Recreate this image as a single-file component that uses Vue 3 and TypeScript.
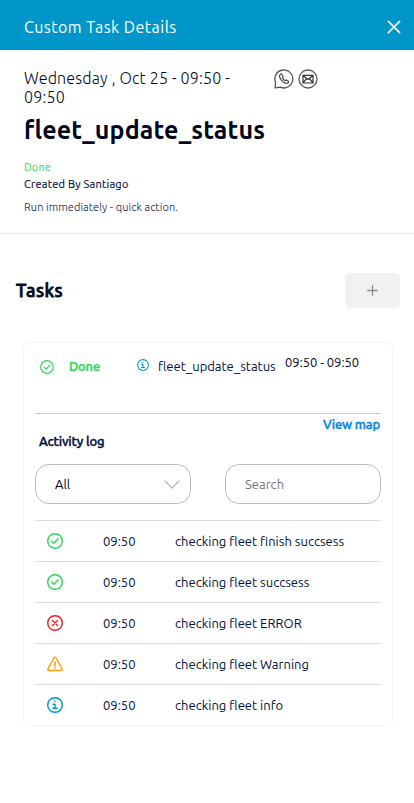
<script setup lang="ts">
import { ref, computed } from 'vue'

type Kind = 'success' | 'error' | 'warning' | 'info'
interface LogEntry {
  kind: Kind
  time: string
  text: string
}

const search = ref('')
const entries: LogEntry[] = [
  { kind: 'success', time: '09:50', text: 'checking fleet finish succsess' },
  { kind: 'success', time: '09:50', text: 'checking fleet succsess' },
  { kind: 'error', time: '09:50', text: 'checking fleet ERROR' },
  { kind: 'warning', time: '09:50', text: 'checking fleet Warning' },
  { kind: 'info', time: '09:50', text: 'checking fleet info' },
]
const visible = computed(() => entries.filter((e) => e.text.includes(search.value)))
</script>

<template>
  <div class="panel">
    <header class="bar">
      <span class="bar-title">Custom Task Details</span>
      <svg class="close" viewBox="0 0 14 14"><path d="M1.4 1.4 12.6 12.6M12.6 1.4 1.4 12.6" /></svg>
    </header>

    <section class="summary">
      <div class="summary-top">
        <div class="date">Wednesday , Oct 25 - 09:50 - 09:50</div>
        <div class="contacts">
          <svg viewBox="0 0 20 20">
            <path d="M1.200 18.900 1.500 13.300A9 9 0 1 1 6.300 18.200Z" />
            <path d="M6.600 5.200c-1.800 1-1.300 3.400.8 5.900s4.700 4 6.400 2.900c.9-.6 1.100-1.200.5-1.700l-1.500-1.100c-.5-.4-.9-.2-1.400.4-.9.100-2.900-1.900-2.900-2.900.6-.5.8-.9.500-1.400l-1-1.800c-.3-.5-.8-.6-1.400-.3Z" />
          </svg>
          <svg viewBox="0 0 20 20">
            <circle cx="10" cy="10" r="9" />
            <path class="heavy" d="M5 6.300h10v7.700H5ZM5 6.500l5 4 5-4M5 13.800l3.200-3.800M15 13.800l-3.200-3.800" />
          </svg>
        </div>
      </div>
      <h1 class="name">fleet_update_status</h1>
      <div class="state">Done</div>
      <div class="author">Created By Santiago</div>
      <div class="note">Run immediately - quick action.</div>
    </section>

    <section class="tasks">
      <div class="tasks-head">
        <h2>Tasks</h2>
        <button class="add" type="button">
          <svg viewBox="0 0 12 12"><path d="M6 .8v10.400M.8 6h10.400" /></svg>
        </button>
      </div>

      <article class="card">
        <div class="task">
          <svg class="icon success task-ok" viewBox="0 0 16 16"><circle cx="8" cy="8" r="7.200" /><path d="m4.800 8.200 2.300 2.200 4-4.500" /></svg>
          <span class="task-state">Done</span>
          <svg class="icon info task-info" viewBox="0 0 16 16"><circle cx="8" cy="8" r="7.200" /><path d="M6.200 7.200H8v4M6 11.300h4.200" /><path class="dot" d="M7.900 4.200v.6" /></svg>
          <span class="task-name">fleet_update_status</span>
          <span class="task-time">09:50 - 09:50</span>
        </div>

        <div class="map-row"><a class="map">View map</a></div>
        <h3 class="log-title">Activity log</h3>

        <div class="filters">
          <div class="field select">
            <span>All</span>
            <svg viewBox="0 0 16 9"><path d="m1 1 7 7 7-7" /></svg>
          </div>
          <input v-model="search" class="field input" placeholder="Search" />
        </div>

        <ul class="log">
          <li v-for="(e, i) in visible" :key="i">
            <svg class="icon" :class="e.kind" viewBox="0 0 16 16">
              <circle v-if="e.kind !== 'warning'" cx="8" cy="8" r="7.300" />
              <path v-if="e.kind === 'success'" d="m4.600 8.200 2.300 2.100 4.200-4.500" />
              <path v-else-if="e.kind === 'error'" d="m5.500 5.500 5 5m0-5-5 5" />
              <template v-else-if="e.kind === 'warning'">
                <path d="M7.100 1.700.9 13.100c-.4.800 0 1.400.8 1.400h12.600c.8 0 1.200-.6.800-1.400L8.900 1.700c-.4-.7-1.400-.7-1.800 0Z" />
                <path class="mark" d="M8 6.200v3.600M8 11.900v.2" />
              </template>
              <template v-else>
                <path d="M6.200 7.200H8v4M6 11.300h4.200" />
                <path class="dot" d="M7.900 4.200v.6" />
              </template>
            </svg>
            <span class="log-time">{{ e.time }}</span>
            <span class="log-text">{{ e.text }}</span>
          </li>
        </ul>
      </article>
    </section>
  </div>
</template>

<style>
body {
  background: #fff;
}
</style>

<style scoped>
.panel {
  min-height: 803px;
  font-family: Ubuntu, 'Noto Sans', sans-serif;
  font-size: 13px;
  color: #00103f;
  background: #fff;
}
h1,
h2,
h3,
ul {
  margin: 0;
  padding: 0;
}
svg {
  display: block;
  flex: none;
  fill: none;
  stroke: currentColor;
  stroke-linecap: round;
  stroke-linejoin: round;
}
.bar {
  box-sizing: border-box;
  height: 50px;
  padding: 4px 13px 0 24px;
  display: flex;
  align-items: center;
  justify-content: space-between;
  background: #0096c9;
  color: #fff;
}
.bar-title {
  font-size: 16px;
  line-height: 46px;
  letter-spacing: 0.48px;
}
.close {
  width: 14px;
  height: 14px;
  stroke-width: 1.6;
}
.summary {
  box-sizing: border-box;
  height: 184px;
  padding: 19px 24px 0;
  border-bottom: 1px solid #e5e5e5;
}
.summary-top {
  display: flex;
}
.date {
  width: 250px;
  box-sizing: border-box;
  padding-right: 30px;
  font-size: 16px;
  font-weight: 300;
  line-height: 19px;
  letter-spacing: 0.19px;
  color: #00071c;
}
.contacts {
  display: flex;
  gap: 4px;
  color: #555;
}
.contacts svg {
  width: 20px;
  height: 20px;
  stroke-width: 1.3;
}
.contacts .heavy {
  stroke: #333;
  stroke-width: 1.2;
}
.name {
  margin-top: 5px;
  font-size: 25px;
  font-weight: 600;
  line-height: 36px;
  letter-spacing: 0.15px;
  color: #00071c;
}
.state,
.author,
.note {
  font-size: 11px;
  line-height: 16px;
}
.state {
  margin-top: 11px;
  letter-spacing: 0.1px;
  color: #2fd657;
}
.author {
  margin-top: 1px;
  letter-spacing: 0.25px;
  -webkit-text-stroke: 0.15px currentColor;
}
.note {
  margin-top: 7px;
  font-weight: 300;
  letter-spacing: 0.1px;
}
.tasks {
  padding: 39px 14px 0 16px;
}
.tasks-head {
  display: flex;
  justify-content: space-between;
}
.tasks-head h2 {
  font-size: 18px;
  font-weight: 500;
  line-height: 35px;
  letter-spacing: 0.5px;
  -webkit-text-stroke: 0.8px currentColor;
  color: #00071c;
}
.add {
  width: 55px;
  height: 35px;
  padding: 0;
  border: 0;
  border-radius: 5px;
  display: grid;
  place-items: center;
  background: #f1f1f1;
  color: #8c8c8c;
}
.add svg {
  width: 11px;
  height: 11px;
  stroke-width: 1.4;
}
.card {
  box-sizing: border-box;
  width: 368px;
  margin: 35px 0 0 8px;
  padding: 0 11px;
  border-radius: 5px;
  box-shadow: 0 0 3px rgba(0, 0, 0, 0.13);
}
.task {
  box-sizing: border-box;
  height: 71px;
  padding: 14px 0 0 5px;
  display: flex;
  align-items: flex-start;
  line-height: 18px;
  border-bottom: 1px solid #ccc;
}
.success {
  color: #2fd657;
}
.error {
  color: #ee1c25;
}
.warning {
  color: #f9a11b;
}
.info {
  color: #0096c9;
}
.icon {
  width: 16px;
  height: 16px;
  stroke-width: 1.4;
}
.icon .mark {
  stroke-width: 1.7;
}
.task .task-ok {
  width: 14px;
  height: 14px;
  margin-top: 3px;
}
.task-state,
.map,
.log-title {
  font-size: 13px;
  font-weight: 500;
  -webkit-text-stroke: 0.4px currentColor;
}
.task-state {
  width: 68px;
  margin-left: 15px;
  letter-spacing: -0.2px;
  color: #2fd657;
}
.task .task-info {
  width: 12px;
  height: 12px;
  margin-top: 2px;
}
.task-name {
  width: 127px;
  margin-left: 9px;
}
.task-time {
  margin-top: -4px;
  letter-spacing: -0.05px;
  color: #00071c;
}
.map-row {
  display: flex;
  justify-content: flex-end;
  height: 19px;
}
.map {
  padding-right: 1px;
  line-height: 20px;
  letter-spacing: -0.2px;
  color: #0084d6;
}
.log-title {
  padding-left: 4px;
  line-height: 17px;
  letter-spacing: -0.15px;
}
.filters {
  display: flex;
  justify-content: space-between;
  margin-top: 14px;
}
.field {
  box-sizing: border-box;
  width: 156px;
  height: 40px;
  border: 1px solid #bbb;
  border-radius: 14px;
}
.select {
  display: flex;
  align-items: center;
  justify-content: space-between;
  padding: 0 10px 0 19px;
  color: #00071c;
}
.select svg {
  width: 16px;
  height: 9px;
  stroke: #bbb;
  stroke-width: 1.3;
}
.input {
  padding: 0 19px;
  outline: 0;
  background: transparent;
  font: inherit;
}
.input::placeholder {
  color: #757575;
}
.log {
  margin-top: 16px;
  list-style: none;
}
.log li {
  box-sizing: border-box;
  height: 41px;
  padding-left: 12px;
  display: flex;
  align-items: center;
  border-top: 1px solid #dcdcdc;
}
.log-time {
  width: 72px;
  margin-left: 40px;
}
</style>
